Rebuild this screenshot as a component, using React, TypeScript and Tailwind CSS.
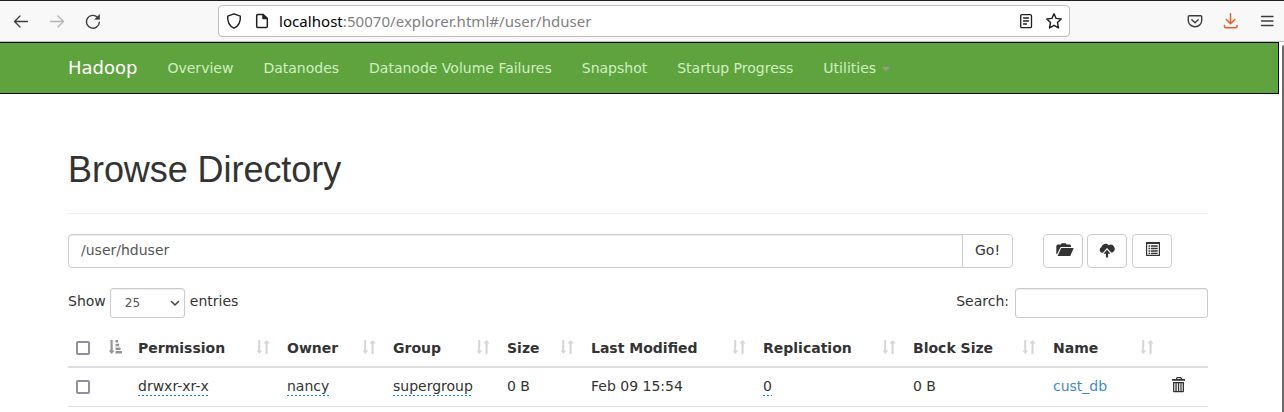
import type { ReactNode } from "react";

function SortBoth() {
  return (
    <svg width="14" height="14" viewBox="0 0 14 14" fill="#d6d6d6">
      <path d="M1.200 0h2v10.500h2L2.200 14-.4 10.500h1.600zM8.500 14h2.100V3.600h2.200L9.600 0 6.500 3.600h2z" />
    </svg>
  );
}

function SortAsc() {
  return (
    <svg width="14" height="14" viewBox="0 0 14 14" fill="#949494">
      <path d="M2.500 0h2.200v10.500h1.900L3.600 14 .8 10.500h1.700zM7.500 0h2.500v2.500H7.500zM7.500 3.700h3.700v2.500H7.500zM7.500 7.400h5v2.500h-5zM7.500 11.100H14v2.500H7.500z" />
    </svg>
  );
}

function Check() {
  return <input type="checkbox" className="block size-[14px] appearance-none rounded-[2px] border-2 border-[#8f8f9d] bg-white" />;
}

function Editable({ children }: { children: ReactNode }) {
  return (
    <span className="inline-block h-5 bg-[repeating-linear-gradient(90deg,#0088cc_0_2px,transparent_2px_4px)] bg-[length:100%_1px] bg-bottom bg-no-repeat align-top leading-5">
      {children}
    </span>
  );
}

function Toolbar() {
  return (
    <header className="flex h-[42px] items-center border-t border-b border-t-[#231f20] border-b-[#bfbfbf] bg-[#f8f8f8] text-[#3d3d3d]">
      <div className="flex w-[218px] shrink-0 items-center pl-[13px]">
        <svg width="16" height="16" viewBox="0 0 16 16" fill="none" stroke="currentColor" strokeWidth="1.300" strokeLinecap="round" strokeLinejoin="round">
          <path d="M14.500 8.500H1.500M7 3L1.500 8.500 7 14" />
        </svg>
        <svg className="ml-[20px] text-[#b4b4b4]" width="16" height="16" viewBox="0 0 16 16" fill="none" stroke="currentColor" strokeWidth="1.300" strokeLinecap="round" strokeLinejoin="round">
          <path d="M1.500 8.500h13M9 3l5.500 5.500L9 14" />
        </svg>
        <svg className="ml-[20px]" width="16" height="16" viewBox="0 0 16 16" fill="none" stroke="currentColor" strokeWidth="1.400" strokeLinecap="round">
          <path d="M14.300 9.200A6.400 6.400 0 1 1 12.400 4.200" />
          <path d="M14.500 1.800v4.500H10z" fill="currentColor" strokeWidth=".6" strokeLinejoin="round" />
        </svg>
      </div>
      <div className="flex h-8 w-[852px] shrink-0 items-center rounded-[4px] border border-[#bfbfbf] bg-white pr-[7px] pl-[7px] text-[#1f1f1f]">
        <svg width="16" height="16" viewBox="0 0 16 16" fill="none" stroke="currentColor" strokeWidth="1.400" strokeLinejoin="round">
          <path d="M8 .8L14.300 3.200c.4 4.800-1 9.400-6.300 12C2.700 12.600 1.300 8 1.700 3.200z" />
        </svg>
        <svg className="ml-[12px]" width="16" height="16" viewBox="0 0 16 16" fill="none" stroke="currentColor" strokeWidth="1.500" strokeLinejoin="round">
          <path d="M9 1.500H3.700a1 1 0 0 0-1 1v11a1 1 0 0 0 1 1h8.600a1 1 0 0 0 1-1V5.500z" />
          <path d="M9 1.500v4h4.300z" fill="currentColor" />
        </svg>
        <span className="ml-[9px] w-[400px] font-['Noto_Sans',sans-serif] text-[15px] leading-none tracking-[0.05px] whitespace-nowrap text-[#808080]">
          <span className="text-black">localhost</span>:50070/explorer.html#/user/hduser
        </span>
        <svg className="ml-auto" width="16" height="16" viewBox="0 0 16 16" fill="none" stroke="currentColor" strokeWidth="1.300" strokeLinecap="round">
          <rect x="2.700" y="1.700" width="10.800" height="13" rx="1.300" />
          <path d="M5.500 5h5M5.500 8h5M5.500 11h3" />
        </svg>
        <svg className="ml-[12px]" width="16" height="16" viewBox="0 0 16 16" fill="none" stroke="currentColor" strokeWidth="1.400" strokeLinejoin="round">
          <path d="M8 .8l2.100 4.600 5.100.6-3.700 3.500 1 5.400L8 12.300l-4.500 2.600 1-5.400L.8 6l5.100-.6z" />
        </svg>
      </div>
      <div className="ml-auto flex items-center pr-[9px]">
        <svg width="16" height="16" viewBox="0 0 16 16" fill="none" stroke="currentColor" strokeWidth="1.400" strokeLinecap="round" strokeLinejoin="round">
          <path d="M2.300 2.700h11.400a1 1 0 0 1 1 1V7.500a6.700 6.200 0 0 1-13.400 0V3.700a1 1 0 0 1 1-1zM4.800 6.700L8 9.700l3.200-3" />
        </svg>
        <svg className="ml-[20px] text-[#ee5a24]" width="16" height="16" viewBox="0 0 16 16" fill="none" stroke="currentColor" strokeWidth="1.500" strokeLinecap="round" strokeLinejoin="round">
          <path d="M7.500 .8v9.700M3.300 6.500l4.200 4.200 4.200-4.200M1.500 12.500v1a1.300 1.300 0 0 0 1.300 1.300h9.900a1.300 1.300 0 0 0 1.300-1.300v-1" />
        </svg>
        <svg className="ml-[20px]" width="16" height="16" viewBox="0 0 16 16" fill="none" stroke="currentColor" strokeWidth="1.300" strokeLinecap="round">
          <path d="M2.500 3.500h11.500M2.500 8h11.500M2.500 12.500h11.500" />
        </svg>
      </div>
    </header>
  );
}

const links = ["Overview", "Datanodes", "Datanode Volume Failures", "Snapshot", "Startup Progress"];

function Nav() {
  return (
    <nav className="flex h-[52px] w-[1279px] items-center border border-l-0 border-[#080808] bg-[#5fa33e] pl-[68px] text-[14px] leading-5 text-[#d0f0c0]">
      <a className="mr-[30px] text-[18px] text-white">Hadoop</a>
      {links.map((l) => (
        <a key={l} className="mr-[30px] whitespace-nowrap">{l}</a>
      ))}
      <a className="flex items-center">
        Utilities
        <span className="mt-[2px] ml-[6px] border-x-4 border-t-4 border-x-transparent border-t-[#999999]" />
      </a>
    </nav>
  );
}

function ToolButton({ className, children }: { className: string; children: ReactNode }) {
  return (
    <button className={`flex h-[34px] w-10 items-center justify-center rounded-[4px] border border-[#cccccc] bg-white text-[#333333] ${className}`}>
      {children}
    </button>
  );
}

const headings = ["Permission", "Owner", "Group", "Size", "Last Modified", "Replication", "Block Size", "Name"];
const widths = [62, 149, 106, 114, 84, 172, 150, 140, 118, 45];

function Listing() {
  return (
    <table className="mt-[10px] w-[1140px] table-fixed border-collapse text-left leading-5">
      <colgroup>
        {widths.map((w, i) => (
          <col key={i} style={{ width: w }} />
        ))}
      </colgroup>
      <thead>
        <tr className="h-[39px] border-b-2 border-[#dddddd]">
          <th className="px-2 pt-px">
            <div className="flex items-center justify-between">
              <Check />
              <span className="-mt-[2px]"><SortAsc /></span>
            </div>
          </th>
          {headings.map((h) => (
            <th key={h} className="px-2 pt-[2px] font-bold whitespace-nowrap">
              <div className="flex items-center justify-between">
                {h}
                <span className="-mt-[2px]"><SortBoth /></span>
              </div>
            </th>
          ))}
          <th />
        </tr>
      </thead>
      <tbody>
        <tr className="h-[39px] border-b border-[#dddddd] *:px-2 *:pb-[2px]">
          <td><div className="pt-[2px]"><Check /></div></td>
          <td><Editable>drwxr-xr-x</Editable></td>
          <td><Editable>nancy</Editable></td>
          <td><Editable>supergroup</Editable></td>
          <td>0 B</td>
          <td>Feb 09 15:54</td>
          <td><Editable>0</Editable></td>
          <td>0 B</td>
          <td className="text-[#428bca]">cust_db</td>
          <td>
            <svg className="-mt-[2px] ml-px" width="14" height="16" viewBox="0 0 14 16" fill="#333333">
              <path d="M4 1.200L5 0h4l1 1.200V2h3v1.800H0V2h4zM5.200 1.200V2h3.600v-.8zM1 5h11v9.300a1 1 0 0 1-1 1H2a1 1 0 0 1-1-1zM2.300 6.200v7.800h1.100V6.200zm2.400 0v7.800h1.200V6.200zm2.500 0v7.800h1.200V6.200zm2.400 0v7.800h1.100V6.200z" fillRule="evenodd" />
            </svg>
          </td>
        </tr>
      </tbody>
    </table>
  );
}

export default function App() {
  return (
    <div className="h-[412px] w-[1284px] overflow-hidden bg-white font-['DejaVu_Sans',sans-serif] text-[14px] text-[#333333]">
      <Toolbar />
      <div className="flex h-[370px] justify-between">
        <div>
          <Nav />
          <main className="ml-[68px] w-[1140px]">
            <h1 className="h-[120px] border-b border-[#eeeeee] pt-[56px] font-['Liberation_Sans',sans-serif] text-[36px] leading-[40px] tracking-[-0.06px]">
              Browse Directory
            </h1>
            <div className="mt-5 flex">
              <input
                className="h-[34px] w-[895px] rounded-l-[4px] border border-[#cccccc] px-3 pb-[2px] text-[#555555] shadow-[inset_0_1px_1px_rgba(0,0,0,0.075)]"
                defaultValue="/user/hduser"
              />
              <button className="-ml-px h-[34px] w-[51px] rounded-r-[4px] border border-[#cccccc] bg-white pb-[2px]">Go!</button>
              <ToolButton className="ml-[30px] pb-[3px] pl-[3px]">
                <svg width="18" height="14" viewBox="0 0 18 14" fill="currentColor">
                  <path d="M.3 11V2.800L1.700 1.500h3l1-1.200h4l1 1.200h3.500L15 2.800V4H4.600L1 11.300zM5.200 5H17.700l-3.400 8H1.600z" />
                </svg>
              </ToolButton>
              <ToolButton className="ml-1 pb-[2px]">
                <svg width="16" height="15" viewBox="0 0 16 15" fill="currentColor">
                  <path d="M3.500 9.800A2.900 2.900 0 0 1 2.300 4.300 4.300 4.300 0 0 1 9.700 2.200 3.800 3.800 0 0 1 13.400 9.500h-1.200L8 5 3.900 9.800zM8 6.800l3.600 3.900H9.100V14.500H6.900V10.700H4.400z" />
                </svg>
              </ToolButton>
              <ToolButton className="ml-[5px] pb-1 pl-px">
                <svg width="14" height="14" viewBox="0 0 14 14" fill="currentColor">
                  <path d="M0 0h14v14H0zM1.200 2v10.800h11.600V2zM2.500 3.300h1.500v1.400H2.500zm2.300 0h6.900v1.400H4.800zM2.500 5.800h1.500v1.400H2.500zM4.800 5.800h6.900v1.400H4.800zM2.500 8.300h1.500v1.400H2.500zm2.300 0h6.900v1.400H4.800zM2.500 10.800h1.500v1.200H2.500zM4.800 10.800h6.900v1.200H4.800z" fillRule="evenodd" />
                </svg>
              </ToolButton>
            </div>
            <div className="mt-5 flex h-[30px]">
              <span className="pt-[3px] leading-5">Show</span>
              <button className="ml-[4px] flex h-[30px] w-[75px] items-center justify-between rounded-[3px] border border-[#cccccc] bg-white pr-[4px] pl-[14px] text-[12px] text-[#555555] shadow-[inset_0_1px_1px_rgba(0,0,0,0.075)]">
                25
                <svg width="10" height="8" viewBox="0 0 10 8" fill="none" stroke="#444444" strokeWidth="1.500" strokeLinecap="round" strokeLinejoin="round">
                  <path d="M1.500 2.500L5 6l3.500-3.500" />
                </svg>
              </button>
              <span className="ml-[5px] pt-[3px] leading-5">entries</span>
              <span className="ml-auto pt-[3px] leading-5">Search:</span>
              <input className="ml-[6px] h-[30px] w-[193px] rounded-[3px] border border-[#cccccc] shadow-[inset_0_1px_1px_rgba(0,0,0,0.075)]" />
            </div>
            <Listing />
          </main>
        </div>
        <div className="mt-[3px] w-[2px] rounded-tl-[2px] bg-[#6b6b6b]" />
      </div>
    </div>
  );
}
